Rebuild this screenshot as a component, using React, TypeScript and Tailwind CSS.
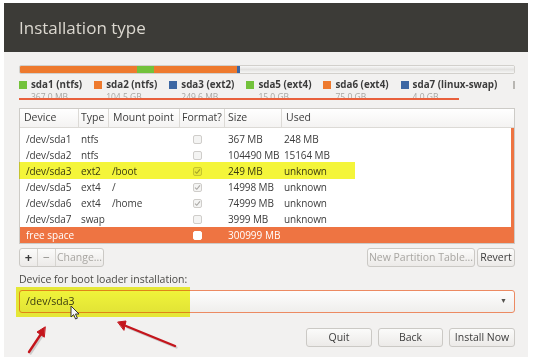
import React from 'react';

type Part = {
  dev: string;
  type: string;
  mount: string;
  format: 'off' | 'on';
  size: string;
  used: string;
};

const PARTS: Part[] = [
  { dev: '/dev/sda1', type: 'ntfs', mount: '', format: 'off', size: '367 MB', used: '248 MB' },
  { dev: '/dev/sda2', type: 'ntfs', mount: '', format: 'off', size: '104490 MB', used: '15164 MB' },
  { dev: '/dev/sda3', type: 'ext2', mount: '/boot', format: 'on', size: '249 MB', used: 'unknown' },
  { dev: '/dev/sda5', type: 'ext4', mount: '/', format: 'on', size: '14998 MB', used: 'unknown' },
  { dev: '/dev/sda6', type: 'ext4', mount: '/home', format: 'on', size: '74999 MB', used: 'unknown' },
  { dev: '/dev/sda7', type: 'swap', mount: '', format: 'off', size: '3999 MB', used: 'unknown' },
];

const LEGEND = [
  { name: 'sda1 (ntfs)', size: '367.0 MB', color: 'bg-[#73c23b]' },
  { name: 'sda2 (ntfs)', size: '104.5 GB', color: 'bg-[#ee7a2e]' },
  { name: 'sda3 (ext2)', size: '249.6 MB', color: 'bg-[#3d67a3]' },
  { name: 'sda5 (ext4)', size: '15.0 GB', color: 'bg-[#73c23b]' },
  { name: 'sda6 (ext4)', size: '75.0 GB', color: 'bg-[#ee7a2e]' },
  { name: 'sda7 (linux-swap)', size: '4.0 GB', color: 'bg-[#3d67a3]' },
];

function Check({ on, light }: { on?: boolean; light?: boolean }) {
  return (
    <div
      className={`w-[9px] h-[9px] rounded-[2px] border flex items-center justify-center ${
        light ? 'bg-white border-white' : 'bg-[#f4f4f3] border-[#cfcdca]'
      }`}
    >
      {on && (
        <svg width="7" height="7" viewBox="0 0 7 7">
          <path d="M1 3.6 L2.8 5.3 L6 1.4" fill="none" stroke="#a9a7a4" strokeWidth="1.1" />
        </svg>
      )}
    </div>
  );
}

function Btn({ children, w, dim }: { children: React.ReactNode; w: string; dim?: boolean }) {
  return (
    <div
      className={`${w} h-[19px] rounded-[3px] border border-[#cbc9c5] bg-gradient-to-b from-[#fbfbfa] to-[#eceae8] flex items-center justify-center text-[10.5px] ${
        dim ? 'text-[#a8a6a2]' : 'text-[#3c3c3c]'
      }`}
    >
      {children}
    </div>
  );
}

export default function App() {
  return (
    <div className="relative w-[540px] h-[363px] bg-white overflow-hidden font-['Open_Sans',sans-serif] text-[#3c3c3c]">
      <div className="ml-[4px] mt-[3px] w-[524px] h-[354px] bg-[#f2f1f0] flex flex-col overflow-hidden">
        {/* titulo */}
        <div className="h-[49px] shrink-0 bg-[#3c3b37] px-[15px] flex items-center">
          <span className="text-[17px] text-[#dcd8d0] leading-none">Installation type</span>
        </div>

        <div className="pl-[15px] pr-[13px] flex flex-col">
          {/* barra de particiones */}
          <div className="mt-[13px] h-[9px] rounded-[2px] flex overflow-hidden border border-[#d2d0cc]">
            <div className="w-[117px] bg-[#ee7a2e]" />
            <div className="w-[17px] bg-[#73c23b]" />
            <div className="w-[83px] bg-[#ee7a2e]" />
            <div className="w-[3px] bg-[#3d67a3]" />
            <div className="flex-1 bg-gradient-to-b from-[#f8f8f8] via-[#e2e1df] to-[#f6f6f5]" />
          </div>

          {/* leyenda */}
          <div className="relative mt-[4px] h-[27px] flex gap-[12px] whitespace-nowrap">
            {LEGEND.map(l => (
              <div key={l.name} className="flex gap-[4px]">
                <div className={`mt-[3px] w-[8px] h-[8px] ${l.color}`} />
                <div className="flex flex-col">
                  <span className="text-[9.8px] font-bold leading-[13px] text-[#3c3c3c]">{l.name}</span>
                  <span className="text-[8.5px] leading-[11px] text-[#a8a6a2]">{l.size}</span>
                </div>
              </div>
            ))}
            <div className="ml-[4px] mt-[3px] w-[8px] h-[8px] border border-[#b8b6b2] bg-white" />
            <div className="absolute left-0 top-[20px] w-[440px] h-[1.5px] bg-[#e8603c]" />
          </div>

          {/* tabla */}
          <div className="mt-[3px] h-[136px] border border-[#cdcbc7] bg-white flex flex-col text-[10px]">
            <div className="h-[19px] shrink-0 flex border-b border-[#dcdad6] bg-gradient-to-b from-white to-[#f4f3f2] text-[10.5px]">
              <div className="w-[59px] pl-[4px] flex items-center border-r border-[#dcdad6]">Device</div>
              <div className="w-[30px] pl-[2px] flex items-center border-r border-[#dcdad6]">Type</div>
              <div className="w-[71px] pl-[4px] flex items-center border-r border-[#dcdad6]">Mount point</div>
              <div className="w-[45px] pl-[2px] flex items-center border-r border-[#dcdad6]">Format?</div>
              <div className="w-[57px] pl-[3px] flex items-center border-r border-[#dcdad6]">Size</div>
              <div className="flex-1 pl-[4px] flex items-center">Used</div>
            </div>
            <div className="flex-1 flex flex-col pt-[3px] border-r-[3px] border-[#ee7442] tracking-[-0.1px]">
              {PARTS.map(p => (
                <div key={p.dev} className="h-[16px] flex items-center">
                  <div className="w-[61px] pl-[6px]">{p.dev}</div>
                  <div className="w-[31px]">{p.type}</div>
                  <div className="w-[81px]">{p.mount}</div>
                  <div className="w-[35px] flex">
                    <Check on={p.format === 'on'} />
                  </div>
                  <div className="w-[56px]">{p.size}</div>
                  <div className="flex-1">{p.used}</div>
                </div>
              ))}
            </div>
            <div className="h-[16px] shrink-0 flex items-center bg-[#ee7442] text-white">
              <div className="w-[173px] pl-[6px]">free space</div>
              <div className="w-[35px] flex">
                <Check light />
              </div>
              <div className="flex-1">300999 MB</div>
            </div>
          </div>

          {/* botones de tabla */}
          <div className="mt-[4px] flex justify-between">
            <div className="flex h-[19px] rounded-[3px] border border-[#cbc9c5] bg-gradient-to-b from-[#fbfbfa] to-[#eceae8] text-[10.5px]">
              <div className="w-[18px] flex items-center justify-center border-r border-[#d6d4d0] text-[13px] font-bold">+</div>
              <div className="w-[18px] flex items-center justify-center border-r border-[#d6d4d0] text-[12px] text-[#8c8a86]">−</div>
              <div className="w-[47px] flex items-center justify-center text-[#a8a6a2]">Change...</div>
            </div>
            <div className="flex gap-[2px]">
              <Btn w="w-[108px]" dim>New Partition Table...</Btn>
              <Btn w="w-[38px]">Revert</Btn>
            </div>
          </div>

          <div className="mt-[4px] text-[10.5px] leading-[16px] text-[#4a4946]">Device for boot loader installation:</div>

          {/* combo */}
          <div className="mt-[3px] h-[23px] rounded-[3px] border border-[#ec8a62] bg-gradient-to-b from-[#fdfdfd] to-[#efeeec] flex items-center justify-between px-[6px] text-[10.5px]">
            <span>/dev/sda3</span>
            <span className="text-[7px] text-[#55534f] pr-[1px]">▼</span>
          </div>

          {/* botones finales */}
          <div className="mt-[15px] flex justify-end gap-[6px]">
            <Btn w="w-[66px]">Quit</Btn>
            <Btn w="w-[65px]">Back</Btn>
            <Btn w="w-[66px]">Install Now</Btn>
          </div>
        </div>
      </div>

      {/* marcador amarillo */}
      <div className="absolute left-[19px] top-[162px] w-[336px] h-[17px] bg-[#f4f53a] mix-blend-multiply" />
      <div className="absolute left-[16px] top-[287px] w-[174px] h-[30px] bg-[#f2f53a] mix-blend-multiply" />

      {/* cursor */}
      <svg className="absolute left-[70px] top-[305px]" width="11" height="15" viewBox="0 0 11 15">
        <path d="M1 1 L1 12 L3.6 9.6 L5.6 14 L7.4 13.2 L5.5 9 L9 9 Z" fill="#f7f7f7" stroke="#333" strokeWidth="1" strokeLinejoin="round" />
      </svg>

      {/* flechas */}
      <svg className="absolute left-0 top-0" width="540" height="363" viewBox="0 0 540 363">
        <g fill="#8a8a8a" stroke="#8a8a8a" strokeLinecap="round" opacity="0.35" transform="translate(1.5 1.5)">
          <line x1="29" y1="352" x2="41" y2="334" strokeWidth="2.4" />
          <line x1="175" y1="346" x2="126" y2="326" strokeWidth="2.4" />
        </g>
        <g fill="#c4151c" stroke="#c4151c" strokeLinecap="round">
          <line x1="29" y1="352" x2="41" y2="334" strokeWidth="2.4" />
          <path d="M45 327 L37 332 L44 337 Z" strokeWidth="1" />
          <line x1="175" y1="346" x2="126" y2="326" strokeWidth="2.4" />
          <path d="M118 322 L126 321 L124 330 Z" strokeWidth="1" />
        </g>
      </svg>
    </div>
  );
}
